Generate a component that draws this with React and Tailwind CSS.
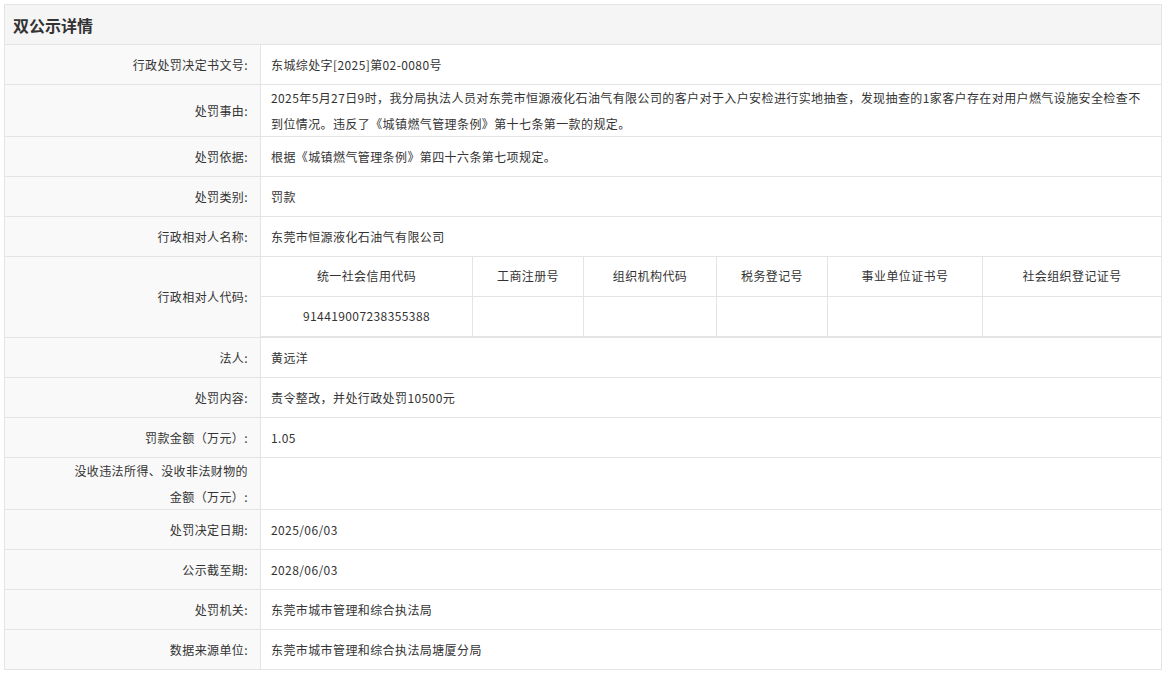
export default function App() {
  const f = { fontFamily: '"Noto Sans CJK SC", "Liberation Sans", sans-serif' };
  const Row = ({ label, h = "h-[40px]", children, multi }) => (
    <div className={`flex border-b border-[#e4e4e4] ${h}`}>
      <div className={`w-[256px] shrink-0 bg-[#f9f9f9] border-r border-[#e4e4e4] flex items-center justify-end pr-[12px] text-right ${multi ? "leading-[26px]" : ""}`}>
        {label}
      </div>
      <div className="flex-1 flex items-center pl-[10px] pr-[12px] leading-[26px]">{children}</div>
    </div>
  );
  const cols = ["统一社会信用代码", "工商注册号", "组织机构代码", "税务登记号", "事业单位证书号", "社会组织登记证号"];
  const widths = ["w-[212px]", "w-[111px]", "w-[133px]", "w-[111px]", "w-[155px]", "flex-1"];
  return (
    <div style={f} className="w-[1173px] h-[675px] bg-white pt-[4px] pl-[4px] text-[12px] tracking-[0.4px] text-[#333]">
      <div className="w-[1158px] border border-[#e4e4e4] border-b-0">
        <div className="h-[40px] bg-[#f5f5f5] border-b border-[#e4e4e4] flex items-center pl-[8px] text-[16px] font-bold tracking-normal text-[#333]">双公示详情</div>
        <Row label="行政处罚决定书文号:">东城综处字[2025]第02-0080号</Row>
        <Row label="处罚事由:" h="h-[52px]">2025年5月27日9时，我分局执法人员对东莞市恒源液化石油气有限公司的客户对于入户安检进行实地抽查，发现抽查的1家客户存在对用户燃气设施安全检查不到位情况。违反了《城镇燃气管理条例》第十七条第一款的规定。</Row>
        <Row label="处罚依据:">根据《城镇燃气管理条例》第四十六条第七项规定。</Row>
        <Row label="处罚类别:">罚款</Row>
        <Row label="行政相对人名称:">东莞市恒源液化石油气有限公司</Row>
        <div className="flex border-b border-[#e4e4e4] h-[81px]">
          <div className="w-[256px] shrink-0 bg-[#f9f9f9] border-r border-[#e4e4e4] flex items-center justify-end pr-[12px]">行政相对人代码:</div>
          <div className="flex-1 flex flex-col border-b border-[#e4e4e4]">
            {[cols, ["914419007238355388", "", "", "", "", ""]].map((r, i) => (
              <div key={i} className={`flex h-[40px] ${i === 0 ? "border-b border-[#e4e4e4]" : ""}`}>
                {r.map((c, j) => (
                  <div key={j} className={`${widths[j]} ${j < 5 ? "border-r border-[#e4e4e4]" : ""} flex items-center justify-center`}>{c}</div>
                ))}
              </div>
            ))}
          </div>
        </div>
        <Row label="法人:">黄远洋</Row>
        <Row label="处罚内容:">责令整改，并处行政处罚10500元</Row>
        <Row label="罚款金额（万元）:">1.05</Row>
        <Row label={<span>没收违法所得、没收非法财物的<br />金额（万元）:</span>} h="h-[52px]" multi></Row>
        <Row label="处罚决定日期:">2025/06/03</Row>
        <Row label="公示截至期:">2028/06/03</Row>
        <Row label="处罚机关:">东莞市城市管理和综合执法局</Row>
        <Row label="数据来源单位:">东莞市城市管理和综合执法局塘厦分局</Row>
      </div>
    </div>
  );
}
